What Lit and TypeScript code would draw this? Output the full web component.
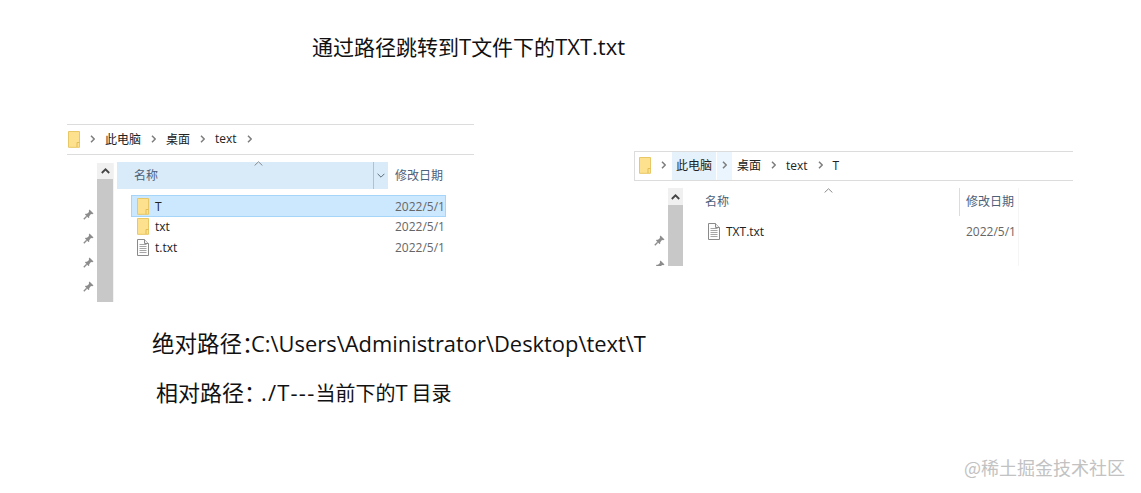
import { LitElement, css, html, svg } from "lit";
import { customElement } from "lit/decorators.js";

const folder = () => html`<svg class="icon" width="12" height="17" viewBox="0 0 12 17">
  <path d="M.5.5h11v15.800H.5z" fill="#fde18f" stroke="#e8c766" />
  <path d="M9 16V11.500H11.500" fill="none" stroke="#e3bd55" />
</svg>`;

const doc = () => html`<svg class="icon" width="12" height="17" viewBox="0 0 12 17">
  <path d="M.5.5H7.500L11.500 4.500V16.500H.5z" fill="#fdfdfd" stroke="#8a8a8a" />
  <path d="M7.500.5V4.500H11.500" fill="#eee" stroke="#8a8a8a" />
  ${[5, 7, 9, 11, 13].map((y) => svg`<path d="M2.500 ${y + 0.5}H9.500" stroke="#a5a5a5" />`)}
</svg>`;

const pin = () => html`<svg class="pin" width="11" height="11" viewBox="0 0 11 11">
  <path d="M6.500.5L10.500 4.500 9.200 5.200 8 5 6.200 7.200 6.200 8.800 5.500 9 2 5.500 2.500 4.800 4 4.800 6 3 5.800 1.800z" fill="#8c8c8c" />
  <path d="M3.700 7.300L.8 10.200" stroke="#8c8c8c" stroke-width="1.300" fill="none" />
</svg>`;

const sep = () => html`<svg class="sep" width="5" height="8" viewBox="0 0 5 8">
  <path d="M1 .8L4.200 4 1 7.200" fill="none" stroke="#7d7d7d" stroke-width="1.500" />
</svg>`;

const caret = () => html`<svg width="9" height="5" viewBox="0 0 9 5">
  <path d="M.6 4.500L4.500 .8 8.400 4.500" fill="none" stroke="#8a8a8a" stroke-width="1" />
</svg>`;

const scrollUp = () => html`<svg width="9" height="6" viewBox="0 0 9 6">
  <path d="M.8 5L4.500 1.300 8.200 5" fill="none" stroke="#444" stroke-width="1.800" />
</svg>`;

@customElement("app-root")
export class AppRoot extends LitElement {
  static styles = css`
    :host {
      display: block;
      width: 1141px;
      height: 493px;
      overflow: hidden;
      background: #fff;
      color: #111;
      font-family: "Noto Sans CJK SC", "Open Sans", sans-serif;
    }
    .lat {
      font-family: "Open Sans", sans-serif;
      font-size: 22px;
    }
    .title {
      margin: 0;
      padding: 31px 0 0 312px;
      height: 124px;
      box-sizing: border-box;
      font-size: 21px;
      font-weight: 400;
      line-height: 30px;
    }
    .windows {
      display: flex;
      align-items: flex-start;
      height: 178px;
      padding-left: 67px;
    }
    .window {
      font-size: 12px;
      flex: none;
    }
    .window.left {
      width: 407px;
    }
    .window.right {
      width: 439px;
      margin: 27px 0 0 160px;
    }
    .bar {
      display: flex;
      align-items: center;
      gap: 10px;
      height: 31px;
      box-sizing: border-box;
      padding: 0 0 2px 1px;
      border-top: 1px solid #dcdcdc;
      border-bottom: 1px solid #dcdcdc;
      color: #222;
      font-family: "Open Sans", "Noto Sans CJK SC", sans-serif;
    }
    .right .bar {
      height: 30px;
      padding-left: 4px;
      border-left: 1px solid #dcdcdc;
    }
    .bar .icon {
      margin-top: 1px;
    }
    .crumb-hot,
    .sep-hot {
      align-self: stretch;
      display: flex;
      align-items: center;
    }
    .crumb-hot {
      background: #e6f2fb;
      padding: 0 4px 2px;
      margin: 0 -4px -2px;
    }
    .sep-hot {
      background: #eaf5fd;
      padding: 0 5px 2px;
      margin: 0 -5px -2px;
    }
    .body {
      display: flex;
      height: 147px;
      box-sizing: border-box;
      padding-top: 8px;
      overflow: hidden;
    }
    .right .body {
      height: 85px;
      padding-top: 7px;
    }
    .rail {
      width: 30px;
      flex: none;
      display: flex;
      flex-direction: column;
      align-items: flex-end;
      gap: 13px;
      padding: 46px 3px 0 0;
      box-sizing: border-box;
    }
    .right .rail {
      width: 34px;
      padding-top: 47px;
      gap: 14px;
      padding-right: 3px;
    }
    .pin {
      flex: none;
    }
    .scroll {
      width: 16px;
      flex: none;
      display: flex;
      flex-direction: column;
      background: #c8c8c8;
    }
    .right .scroll {
      width: 15px;
    }
    .scroll-up {
      height: 16px;
      background: #f0f0f0;
      display: flex;
      align-items: center;
      justify-content: center;
    }
    .right .scroll-up {
      height: 17px;
    }
    .main {
      position: relative;
      flex: none;
      width: 361px;
      box-sizing: border-box;
      border-left: 1px solid #f3f3f3;
    }
    .right .main {
      width: 336px;
      border-left: none;
      border-right: 1px solid #f5f5f5;
    }
    .head {
      display: flex;
      align-items: center;
      height: 27px;
      color: #4c607a;
      margin: -1px 0 6px 3px;
    }
    .right .head {
      height: 28px;
      margin: 0 0 5px 0;
    }
    .head-name {
      width: 239px;
      height: 25px;
      padding: 0 0 2px 17px;
      display: flex;
      align-items: center;
      background: #d9ebf9;
    }
    .right .head-name {
      width: 254px;
      padding: 0 0 3px 22px;
      background: none;
    }
    .head-drop {
      width: 14px;
      height: 100%;
      display: flex;
      align-items: center;
      justify-content: center;
      background: #d9ebf9;
      border-left: 1px solid #a9c4da;
    }
    .right .head-sep {
      width: 1px;
      height: 100%;
      background: #dcdcdc;
    }
    .head-date {
      padding: 0 0 2px 7px;
    }
    .right .head-date {
      padding: 0 0 3px 6px;
    }
    .sort {
      position: absolute;
      left: 140px;
      top: -2px;
      line-height: 0;
    }
    .right .sort {
      left: 141px;
      top: 0;
    }
    .row {
      display: grid;
      grid-template-columns: 264px 1fr;
      align-items: center;
      height: 21px;
      width: 315px;
      margin-left: 17px;
      box-sizing: border-box;
      overflow: hidden;
    }
    .right .row {
      grid-template-columns: 283px 1fr;
      width: 335px;
      margin-left: 0;
    }
    .row.selected {
      height: 22px;
      margin-bottom: -1px;
      background: #cce8ff;
      border: 1px solid #a6d5fa;
    }
    .name {
      display: flex;
      align-items: center;
      gap: 6px;
      padding-left: 6px;
      color: #222;
      font-family: "Open Sans", sans-serif;
    }
    .row.selected .name {
      padding-left: 5px;
    }
    .right .name {
      padding-left: 25px;
    }
    .date {
      color: #666;
      white-space: nowrap;
      overflow: hidden;
      font-family: "Open Sans", sans-serif;
    }
    .row.selected .date {
      margin-left: -1px;
    }
    .paths {
      padding-top: 25px;
      font-size: 20px;
      line-height: 30px;
    }
    .paths p {
      margin: 0;
      white-space: nowrap;
    }
    .abs {
      padding-left: 152px;
    }
    .abs .lat {
      font-size: 21.9px;
    }
    .rel {
      padding: 17px 0 0 156px;
    }
    .rel .dashes {
      letter-spacing: 1.2px;
    }
    .rel .gap-after {
      letter-spacing: 4px;
    }
    .lead {
      font-size: 22.5px;
    }
    .rel .lead {
      font-size: 22px;
    }
    .colon {
      font-size: 22px;
      letter-spacing: -13px;
    }
    .colon.wide {
      letter-spacing: -5px;
    }
    .mark {
      margin: 47px 16px 0 0;
      text-align: right;
      font-size: 18px;
      line-height: 24px;
      color: #c2c2c2;
    }
  `;

  private fileRow(icon: unknown, name: string, selected = false) {
    return html`<div class="row ${selected ? "selected" : ""}">
      <span class="name">${icon}${name}</span>
      <span class="date">2022/5/1</span>
    </div>`;
  }

  render() {
    return html`
      <h1 class="title">通过路径跳转到<span class="lat">T</span>文件下的<span class="lat">TXT.txt</span></h1>
      <div class="windows">
        <section class="window left">
          <div class="bar">
            ${folder()} ${sep()} <span>此电脑</span> ${sep()} <span>桌面</span> ${sep()}
            <span>text</span> ${sep()}
          </div>
          <div class="body">
            <div class="rail">${pin()}${pin()}${pin()}${pin()}</div>
            <div class="scroll"><div class="scroll-up">${scrollUp()}</div></div>
            <div class="main">
              <span class="sort">${caret()}</span>
              <div class="head">
                <span class="head-name">名称</span>
                <span class="head-drop">
                  <svg width="8" height="5" viewBox="0 0 8 5">
                    <path d="M.6.8L4 4.200 7.400.8" fill="none" stroke="#5b6b7c" />
                  </svg>
                </span>
                <span class="head-date">修改日期</span>
              </div>
              ${this.fileRow(folder(), "T", true)} ${this.fileRow(folder(), "txt")}
              ${this.fileRow(doc(), "t.txt")}
            </div>
          </div>
        </section>
        <section class="window right">
          <div class="bar">
            ${folder()} ${sep()} <span class="crumb-hot">此电脑</span>
            <span class="sep-hot">${sep()}</span> <span>桌面</span> ${sep()} <span>text</span>
            ${sep()} <span>T</span>
          </div>
          <div class="body">
            <div class="rail">${pin()}${pin()}</div>
            <div class="scroll"><div class="scroll-up">${scrollUp()}</div></div>
            <div class="main">
              <span class="sort">${caret()}</span>
              <div class="head">
                <span class="head-name">名称</span>
                <span class="head-sep"></span>
                <span class="head-date">修改日期</span>
              </div>
              ${this.fileRow(doc(), "TXT.txt")}
            </div>
          </div>
        </section>
      </div>
      <div class="paths">
        <p class="abs"><span class="lead">绝对路径</span><span class="colon">：</span><span class="lat">C:\\Users\\Administrator\\Desktop\\text\\T</span></p>
        <p class="rel"><span class="lead">相对路径</span><span class="colon wide">：</span><span class="lat dashes">./T---</span>当前下的<span class="lat gap-after">T</span>目录</p>
      </div>
      <p class="mark">@稀土掘金技术社区</p>
    `;
  }
}
